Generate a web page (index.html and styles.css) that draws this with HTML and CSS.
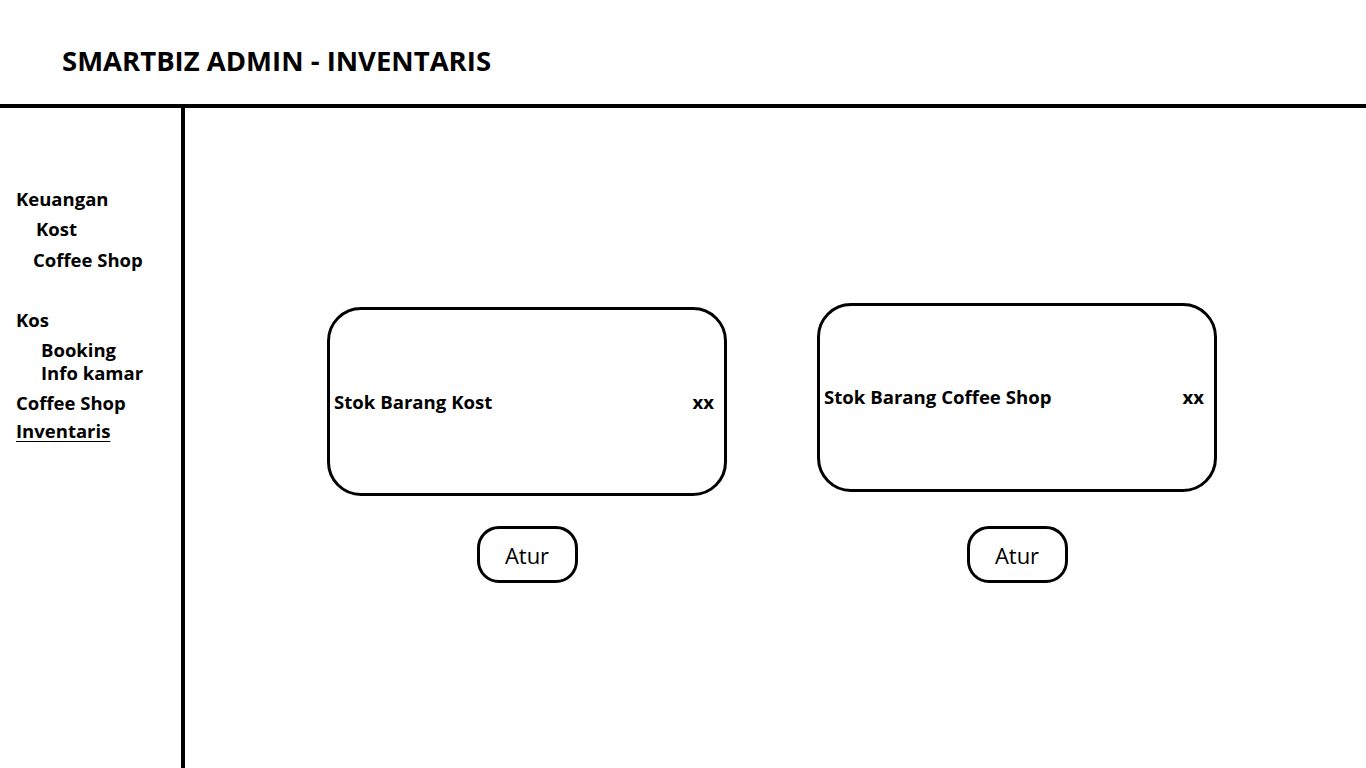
FILE: index.html
```html
<!DOCTYPE html>
<html lang="id">
<head>
    <meta charset="UTF-8">
    <meta name="viewport" content="width=device-width, initial-scale=1.0">
    <title>SmartBiz Admin - Inventaris</title>
    <link rel="stylesheet" href="styles.css">
</head>
<body>
    <!-- Header -->
    <header class="top-bar">
        <h1>SMARTBIZ ADMIN - INVENTARIS</h1>
    </header>

    <div class="layout">
        <!-- Sidebar menu -->
        <nav class="sidebar">
            <a class="menu-item" href="#">Keuangan</a>
            <a class="menu-item sub-kost" href="#">Kost</a>
            <a class="menu-item sub-coffee" href="#">Coffee Shop</a>
            <a class="menu-item group-kos" href="#">Kos</a>
            <a class="menu-item sub-booking" href="#">Booking</a>
            <a class="menu-item sub-kamar" href="#">Info kamar</a>
            <a class="menu-item group-coffee" href="#">Coffee Shop</a>
            <a class="menu-item active" href="#">Inventaris</a>
        </nav>

        <!-- Stock cards -->
        <main class="content">
            <div class="stock-grid">
                <div class="card card-kost">
                    <span>Stok Barang Kost</span>
                    <span>xx</span>
                </div>
                <div class="card card-coffee">
                    <span>Stok Barang Coffee Shop</span>
                    <span>xx</span>
                </div>
                <button class="btn-atur">Atur</button>
                <button class="btn-atur">Atur</button>
            </div>
        </main>
    </div>
</body>
</html>
```

FILE: styles.css
```css
body {
    margin: 0;
    background-color: white;
    color: black;
    font-family: "Open Sans", "Liberation Sans", sans-serif;
}

.top-bar {
    height: 108px;
    box-sizing: border-box;
    border-bottom: 4px solid black;
    padding-left: 62px;
    display: flex;
    align-items: center;
}
.top-bar h1 {
    margin: 16px 0 0 0;
    font-size: 27.5px;
    font-weight: 700;
}

.layout {
    display: flex;
    height: 660px;
}

.sidebar {
    width: 181px;
    border-right: 4px solid black;
    padding-top: 79px;
    display: flex;
    flex-direction: column;
    align-items: flex-start;
}
.menu-item {
    color: black;
    text-decoration: none;
    font-size: 18.5px;
    font-weight: 700;
    line-height: 23px;
    margin-left: 16px;
}
.sub-kost { margin-left: 36px; margin-top: 7px; }
.sub-coffee { margin-left: 33px; margin-top: 8px; }
.group-kos { margin-top: 37px; }
.sub-booking { margin-left: 41px; margin-top: 7px; }
.sub-kamar { margin-left: 41px; }
.group-coffee { margin-top: 7px; }
.menu-item.active {
    margin-top: 5px;
    text-decoration: underline;
    text-underline-offset: 3px;
}

.content {
    flex: 1;
    padding-top: 195px;
    padding-left: 142px;
}

.stock-grid {
    display: grid;
    grid-template-columns: 400px 400px;
    grid-template-rows: 193px auto;
    column-gap: 90px;
    row-gap: 30px;
}

.card {
    height: 189px;
    box-sizing: border-box;
    border: 3.5px solid black;
    border-radius: 34px;
    display: flex;
    align-items: center;
    justify-content: space-between;
    padding: 0 10px 0 4px;
    font-size: 18.6px;
    font-weight: 700;
}
.card-kost { align-self: end; }
.card-coffee {
    align-self: start;
    padding-bottom: 3px;
}

.btn-atur {
    justify-self: center;
    width: 101px;
    height: 57px;
    background-color: white;
    border: 3px solid black;
    border-radius: 22px;
    font-family: "Open Sans", "Liberation Sans", sans-serif;
    font-size: 22px;
    color: black;
    cursor: pointer;
}
```
